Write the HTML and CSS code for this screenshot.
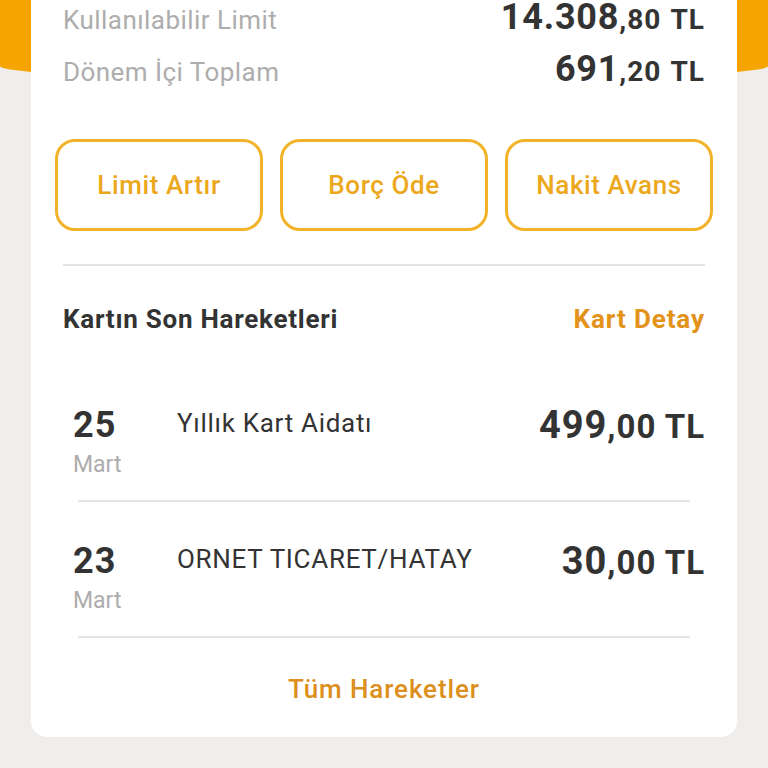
FILE: index.html
```html
<!DOCTYPE html>
<html lang="tr">
<head>
    <meta charset="UTF-8">
    <meta name="viewport" content="width=device-width, initial-scale=1.0">
    <title>Kart Özeti</title>
    <link rel="stylesheet" href="styles.css">
</head>
<body>
    <div class="header-bg"></div>

    <div class="card">
        <div class="summary">
            <div class="summary-row">
                <span class="label">Kullanılabilir Limit</span>
                <span class="value">14.308<small>,80 TL</small></span>
            </div>
            <div class="summary-row">
                <span class="label">Dönem İçi Toplam</span>
                <span class="value">691<small>,20 TL</small></span>
            </div>
        </div>

        <div class="actions">
            <button class="action-btn">Limit Artır</button>
            <button class="action-btn">Borç Öde</button>
            <button class="action-btn">Nakit Avans</button>
        </div>

        <hr class="divider">

        <div class="section-head">
            <h2>Kartın Son Hareketleri</h2>
            <a href="#" class="link">Kart Detay</a>
        </div>

        <ul class="tx-list">
            <li class="tx">
                <div class="tx-date">
                    <span class="day">25</span>
                    <span class="month">Mart</span>
                </div>
                <div class="tx-desc">Yıllık Kart Aidatı</div>
                <div class="tx-amount">499<small>,00 TL</small></div>
            </li>
            <li class="tx">
                <div class="tx-date">
                    <span class="day">23</span>
                    <span class="month">Mart</span>
                </div>
                <div class="tx-desc">ORNET TICARET/HATAY</div>
                <div class="tx-amount">30<small>,00 TL</small></div>
            </li>
        </ul>

        <div class="all-link">
            <a href="#" class="link link-all">Tüm Hareketler</a>
        </div>
    </div>
</body>
</html>
```

FILE: styles.css
```css
body {
    margin: 0;
    font-family: Roboto, "Noto Sans", Arial, sans-serif;
    background-color: #efeeec;
    color: #333;
}

/* turuncu üst alan, kartın arkasında kalıyor */
.header-bg {
    position: absolute;
    top: 0;
    left: 0;
    width: 100%;
    height: 81px;
    background: #f5a400;
    border-radius: 0 0 50% 50% / 0 0 15px 15px;
}

.card {
    position: relative;
    margin: 0 31px;
    padding: 0 32px 28px;
    background: #fff;
    border-radius: 0 0 16px 16px;
}

.summary {
    margin-top: -3px;
}

.summary-row {
    display: flex;
    justify-content: space-between;
    align-items: baseline;
    height: 52px;
    line-height: 40px;
}

.label {
    font-size: 26px;
    letter-spacing: 0.45px;
    color: #adadad;
}

.value {
    font-size: 36px;
    font-weight: 700;
    letter-spacing: 0.8px;
    color: #333;
}

.value small {
    font-size: 28px;
    letter-spacing: 1px;
    word-spacing: 2px;
}

.actions {
    display: flex;
    gap: 17px;
    margin: 38px -8px 0;
}

.action-btn {
    flex: 1;
    height: 92px;
    background: #fff;
    border: 3px solid #f2b32a;
    border-radius: 20px;
    font-family: inherit;
    font-size: 26px;
    font-weight: 500;
    letter-spacing: 0.6px;
    color: #eca81c;
}

.divider {
    border: none;
    border-top: 2px solid #e2e2e2;
    margin: 33px 0 0;
}

.section-head {
    display: flex;
    justify-content: space-between;
    align-items: baseline;
    margin-top: 37px;
    line-height: 32px;
}

.section-head h2 {
    margin: 0;
    font-size: 26px;
    font-weight: 700;
    letter-spacing: 0.75px;
    color: #333;
}

.link {
    font-size: 26px;
    font-weight: 700;
    letter-spacing: 0.9px;
    color: #e3921a;
    text-decoration: none;
}

.tx-list {
    list-style: none;
    margin: 31px 0 0;
    padding: 0 15px;
}

.tx {
    display: flex;
    align-items: flex-start;
    height: 136px;
    box-sizing: border-box;
    padding-top: 39px;
    border-bottom: 2px solid #e4e4e4;
}

.tx-date {
    width: 104px;
    margin-left: -5px;
    display: flex;
    flex-direction: column;
}

.day {
    font-size: 36px;
    font-weight: 700;
    letter-spacing: 1.2px;
    line-height: 40px;
}

.month {
    font-size: 23px;
    color: #adadad;
    line-height: 40px;
}

.tx-desc {
    flex: 1;
    margin-top: 2px;
    font-size: 26px;
    letter-spacing: 0.7px;
    line-height: 32px;
    color: #333;
}

.tx-amount {
    font-size: 38px;
    font-weight: 700;
    letter-spacing: 1px;
    line-height: 40px;
    margin-right: -15px;
}

.tx-amount small {
    font-size: 33px;
}

.all-link {
    text-align: center;
    margin-top: 35px;
    line-height: 32px;
}

.link-all {
    font-weight: 500;
    color: #dc8f1c;
}
```
